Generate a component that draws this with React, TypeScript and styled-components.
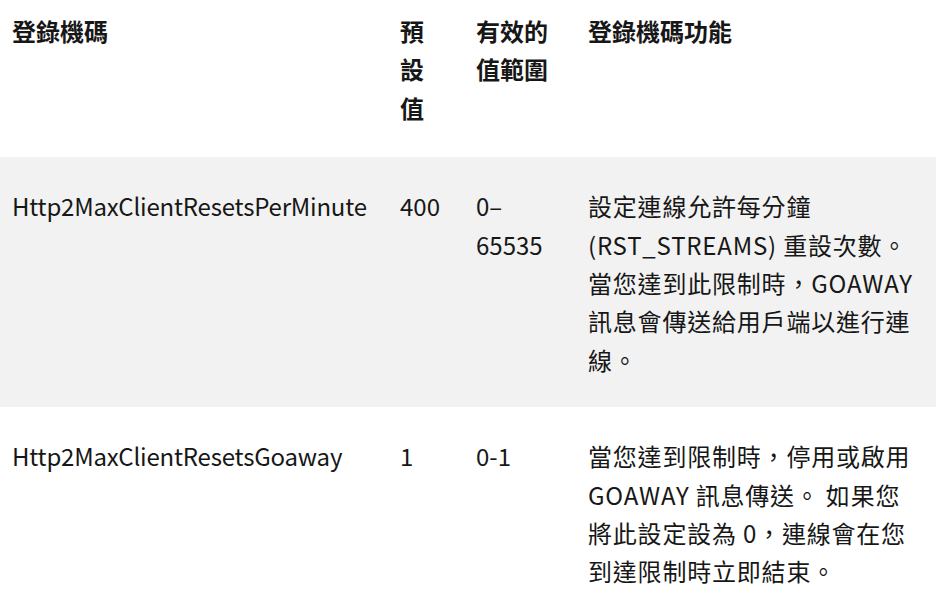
import React from 'react';
import styled, { createGlobalStyle } from 'styled-components';

interface Row {
  name: string;
  defaultValue: string;
  range: string;
  description: string[];
}

// description is kept as the rendered lines so the wrapping matches the original column
const rows: Row[] = [
  {
    name: 'Http2MaxClientResetsPerMinute',
    defaultValue: '400',
    range: '0–65535',
    description: [
      '設定連線允許每分鐘',
      '(RST_STREAMS) 重設次數。',
      '當您達到此限制時，GOAWAY',
      '訊息會傳送給用戶端以進行連',
      '線。',
    ],
  },
  {
    name: 'Http2MaxClientResetsGoaway',
    defaultValue: '1',
    range: '0-1',
    description: [
      '當您達到限制時，停用或啟用',
      'GOAWAY 訊息傳送。 如果您',
      '將此設定設為 0，連線會在您',
      '到達限制時立即結束。',
    ],
  },
];

const GlobalStyle = createGlobalStyle`
  html, body {
    margin: 0;
    background: #fff;
  }
`;

const StyledTable = styled.table`
  border-collapse: collapse;
  color: #171717;
  font-family: 'Noto Sans CJK TC', 'Noto Sans', sans-serif;
  font-size: 24px;
  line-height: 38.4px;
  table-layout: fixed;
  width: 936px;
`;

const StyledHeadCell = styled.th<{ $narrow?: boolean }>`
  font-weight: 700;
  padding: 12px ${({ $narrow }) => ($narrow ? '28px' : '12px')} 30px 12px;
  text-align: left;
  vertical-align: top;
`;

const StyledRow = styled.tr`
  &:nth-child(odd) {
    background-color: #f2f2f2;
  }
`;

const StyledCell = styled.td`
  padding: 30px 12px 28px;
  text-align: left;
  vertical-align: top;
  word-break: break-word;
`;

const StyledKey = styled.span`
  letter-spacing: -0.2px;
`;

const StyledLine = styled.span`
  display: block;
  letter-spacing: 0.8px;
  white-space: nowrap;
`;

export default function App() {
  return (
    <>
      <GlobalStyle />
      <StyledTable>
        <colgroup>
          <col style={{ width: 388 }} />
          <col style={{ width: 76 }} />
          <col style={{ width: 112 }} />
          <col style={{ width: 360 }} />
        </colgroup>
        <thead>
          <tr>
            <StyledHeadCell>登錄機碼</StyledHeadCell>
            <StyledHeadCell $narrow>預設值</StyledHeadCell>
            <StyledHeadCell>有效的值範圍</StyledHeadCell>
            <StyledHeadCell>登錄機碼功能</StyledHeadCell>
          </tr>
        </thead>
        <tbody>
          {rows.map((row) => (
            <StyledRow key={row.name}>
              <StyledCell>
                <StyledKey>{row.name}</StyledKey>
              </StyledCell>
              <StyledCell>{row.defaultValue}</StyledCell>
              <StyledCell>{row.range}</StyledCell>
              <StyledCell>
                {row.description.map((line) => (
                  <StyledLine key={line}>{line}</StyledLine>
                ))}
              </StyledCell>
            </StyledRow>
          ))}
        </tbody>
      </StyledTable>
    </>
  );
}
